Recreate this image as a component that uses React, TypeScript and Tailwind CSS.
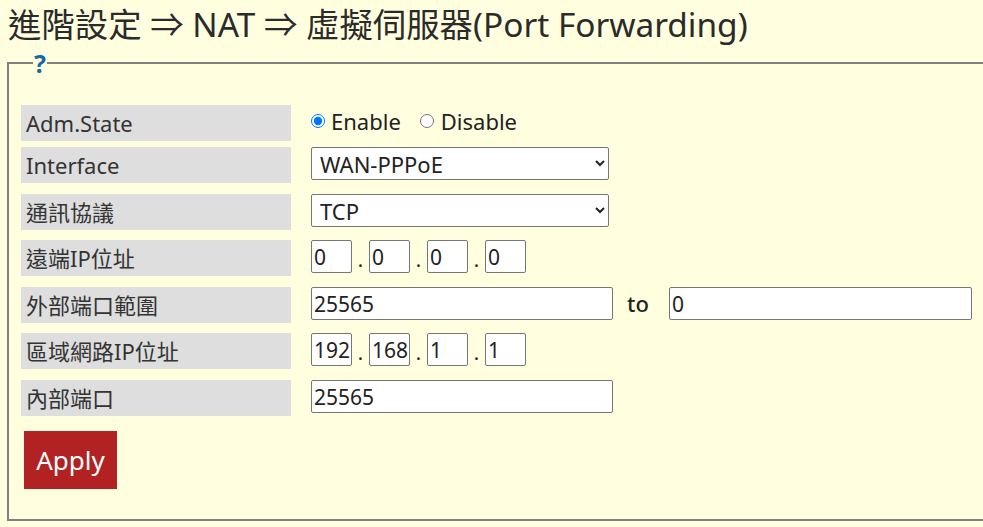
import type { ReactNode } from 'react';

const FONT = "font-['Noto_Sans','Noto_Sans_CJK_TC',sans-serif]";

function Label({ children }: { children: ReactNode }) {
    return (
        <div className="h-[36px] bg-[#dedede] flex items-center pl-[5px] text-[22px] text-[#333]">
            {children}
        </div>
    );
}

function Row({ label, children, className = '' }: { label: string; children: ReactNode; className?: string }) {
    return (
        <div className={`grid grid-cols-[270px_1fr] gap-x-5 items-start h-[36px] ${className}`}>
            <Label>{label}</Label>
            <div className="flex items-center">{children}</div>
        </div>
    );
}

function TextBox({ value, className = '' }: { value: string; className?: string }) {
    return (
        <input
            type="text"
            defaultValue={value}
            className={`h-[33px] border border-[#767676] rounded-[2px] bg-white pl-[2px] text-[21px] text-[#222] outline-none ${className}`}
        />
    );
}

function IpBoxes({ parts }: { parts: string[] }) {
    return (
        <div className="flex items-end">
            {parts.map((p, i) => (
                <div key={i} className="flex items-end">
                    {i > 0 && <span className="w-[17px] text-center text-[20px] leading-[26px] text-[#222]">.</span>}
                    <TextBox value={p} className="w-[41px]" />
                </div>
            ))}
        </div>
    );
}

function Select({ value, options }: { value: string; options: string[] }) {
    return (
        <select
            defaultValue={value}
            className="w-[298px] h-[33px] border border-[#767676] rounded-[2px] bg-white pl-[4px] text-[22px] text-[#222]"
        >
            {options.map((o) => (
                <option key={o}>{o}</option>
            ))}
        </select>
    );
}

export default function App() {
    return (
        <div className={`min-h-[527px] bg-[#ffffe0] overflow-hidden ${FONT}`}>
            <h1 className="pl-[8px] text-[33.4px] leading-[48px] text-[#2b2b2b] whitespace-nowrap">
                進階設定 ⇒ NAT ⇒ 虛擬伺服器(Port Forwarding)
            </h1>

            <fieldset className="ml-[7px] w-[1000px] border-2 border-[#808080] pl-[12px] pt-[27px] pb-[30px]">
                <legend className="ml-[12px] px-[1px] text-[25px] leading-[30px] font-bold text-[#1769a0]">?</legend>

                <Row label="Adm.State">
                    <label className="flex items-center h-[36px] text-[22px] text-[#222] pb-[4px]">
                        <input type="radio" name="state" defaultChecked className="w-[14px] h-[14px] m-0 accent-[#0075ff]" />
                        <span className="ml-[6px]">Enable</span>
                    </label>
                    <label className="flex items-center h-[36px] text-[22px] text-[#222] ml-[19px] pb-[4px]">
                        <input type="radio" name="state" className="w-[14px] h-[14px] m-0" />
                        <span className="ml-[7px]">Disable</span>
                    </label>
                </Row>

                <Row label="Interface" className="mt-[6px]">
                    <Select value="WAN-PPPoE" options={['WAN-PPPoE', 'WAN-DHCP', 'LAN']} />
                </Row>

                <Row label="通訊協議" className="mt-[11px]">
                    <Select value="TCP" options={['TCP', 'UDP', 'TCP/UDP']} />
                </Row>

                <Row label="遠端IP位址" className="mt-[10px]">
                    <IpBoxes parts={['0', '0', '0', '0']} />
                </Row>

                <Row label="外部端口範圍" className="mt-[11px]">
                    <TextBox value="25565" className="w-[302px]" />
                    <span className="ml-[14px] mr-[20px] text-[22px] font-medium text-[#222]">to</span>
                    <TextBox value="0" className="w-[303px]" />
                </Row>

                <Row label="區域網路IP位址" className="mt-[10px]">
                    <IpBoxes parts={['192', '168', '1', '1']} />
                </Row>

                <Row label="內部端口" className="mt-[11px]">
                    <TextBox value="25565" className="w-[302px]" />
                </Row>

                <button className="mt-[15px] ml-[3px] w-[93px] h-[58px] bg-[#b22222] text-white text-[26px]">
                    Apply
                </button>
            </fieldset>
        </div>
    );
}
